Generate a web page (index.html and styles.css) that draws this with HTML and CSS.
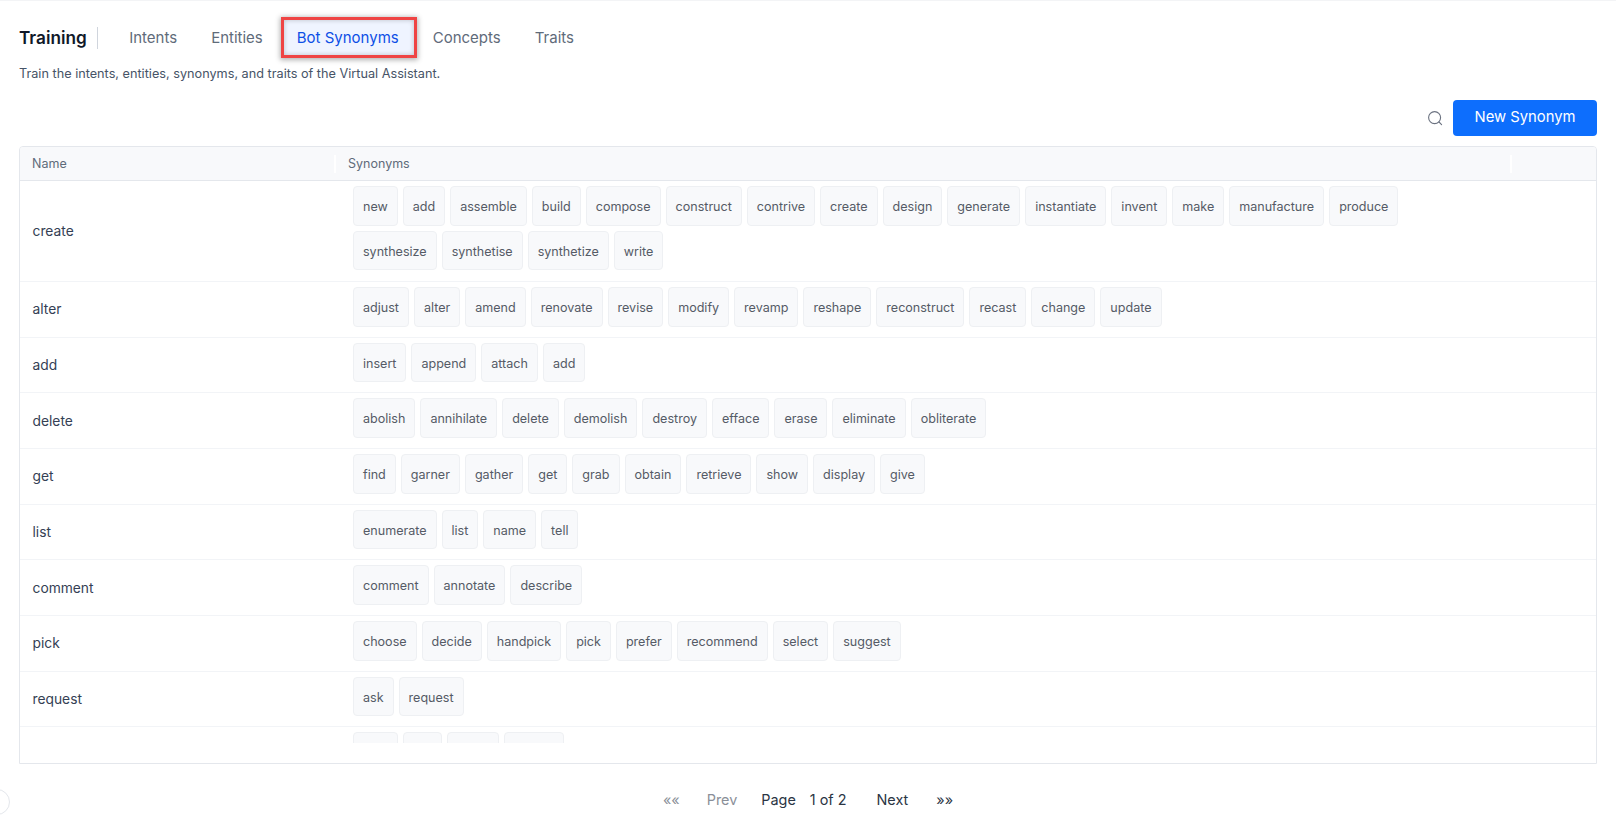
FILE: index.html
```html
<!DOCTYPE html>
<html lang="en">
<head>
<meta charset="utf-8">
<title>Training</title>
<link rel="stylesheet" href="styles.css">
</head>
<body>
<div class="page">
  <header class="tabs">
    <h1 class="title">Training</h1>
    <nav class="tablist">
      <a class="tab">Intents</a>
      <a class="tab">Entities</a>
      <a class="tab active">Bot Synonyms</a>
      <a class="tab">Concepts</a>
      <a class="tab">Traits</a>
    </nav>
  </header>
  <p class="desc">Train the intents, entities, synonyms, and traits of the Virtual Assistant.</p>
  <div class="actions">
    <svg class="search" width="16" height="16" viewBox="0 0 16 16" fill="none" stroke="#6b7280" stroke-width="1.1"><circle cx="7.6" cy="7.6" r="6"/><path d="M12 12 14.6 14.6" stroke-linecap="round"/></svg>
    <button class="primary">New Synonym</button>
  </div>
  <section class="table">
    <div class="thead">
      <div class="th name">Name</div>
      <div class="th syn">Synonyms</div>
      <div class="th end"></div>
    </div>
    <div class="tbody">
      <div class="row"><div class="cell-name">create</div><div class="chips">
        <span class="chip">new</span><span class="chip">add</span><span class="chip">assemble</span><span class="chip">build</span><span class="chip">compose</span><span class="chip">construct</span><span class="chip">contrive</span><span class="chip">create</span><span class="chip">design</span><span class="chip">generate</span><span class="chip">instantiate</span><span class="chip">invent</span><span class="chip">make</span><span class="chip">manufacture</span><span class="chip">produce</span><span class="chip">synthesize</span><span class="chip">synthetise</span><span class="chip">synthetize</span><span class="chip">write</span>
      </div></div>
      <div class="row"><div class="cell-name">alter</div><div class="chips">
        <span class="chip">adjust</span><span class="chip">alter</span><span class="chip">amend</span><span class="chip">renovate</span><span class="chip">revise</span><span class="chip">modify</span><span class="chip">revamp</span><span class="chip">reshape</span><span class="chip">reconstruct</span><span class="chip">recast</span><span class="chip">change</span><span class="chip">update</span>
      </div></div>
      <div class="row"><div class="cell-name">add</div><div class="chips">
        <span class="chip">insert</span><span class="chip">append</span><span class="chip">attach</span><span class="chip">add</span>
      </div></div>
      <div class="row"><div class="cell-name">delete</div><div class="chips">
        <span class="chip">abolish</span><span class="chip">annihilate</span><span class="chip">delete</span><span class="chip">demolish</span><span class="chip">destroy</span><span class="chip">efface</span><span class="chip">erase</span><span class="chip">eliminate</span><span class="chip">obliterate</span>
      </div></div>
      <div class="row"><div class="cell-name">get</div><div class="chips">
        <span class="chip">find</span><span class="chip">garner</span><span class="chip">gather</span><span class="chip">get</span><span class="chip">grab</span><span class="chip">obtain</span><span class="chip">retrieve</span><span class="chip">show</span><span class="chip">display</span><span class="chip">give</span>
      </div></div>
      <div class="row"><div class="cell-name">list</div><div class="chips">
        <span class="chip">enumerate</span><span class="chip">list</span><span class="chip">name</span><span class="chip">tell</span>
      </div></div>
      <div class="row"><div class="cell-name">comment</div><div class="chips">
        <span class="chip">comment</span><span class="chip">annotate</span><span class="chip">describe</span>
      </div></div>
      <div class="row"><div class="cell-name">pick</div><div class="chips">
        <span class="chip">choose</span><span class="chip">decide</span><span class="chip">handpick</span><span class="chip">pick</span><span class="chip">prefer</span><span class="chip">recommend</span><span class="chip">select</span><span class="chip">suggest</span>
      </div></div>
      <div class="row"><div class="cell-name">request</div><div class="chips">
        <span class="chip">ask</span><span class="chip">request</span>
      </div></div>
      <div class="row"><div class="cell-name"></div><div class="chips">
        <span class="chip blank"></span><span class="chip blank short"></span><span class="chip blank mid"></span><span class="chip blank wide"></span>
      </div></div>
    </div>
  </section>
  <footer class="pager">
    <span class="pg muted first">««</span>
    <span class="pg muted prev">Prev</span>
    <span class="pg dark page-label">Page</span>
    <span class="pg dark of">1 of 2</span>
    <span class="pg dark next">Next</span>
    <span class="pg dark last">»»</span>
  </footer>
</div>
<div class="dock"></div>
</body>
</html>
```
FILE: styles.css
```css
* { box-sizing: border-box; }
html, body { margin: 0; height: 830px; overflow: hidden; background: #fff; }
body { font-family: Inter, "Liberation Sans", sans-serif; color: #202124; border-top: 1px solid #f3f4f6; }
.page { padding: 0 19px; }
.tabs { display: flex; align-items: center; height: 74px; }
.title { margin: 0; font-size: 17.2px; line-height: 22px; font-weight: 600; color: #101828; padding-right: 10px; border-right: 1px solid #d0d5dd; }
.tablist { display: flex; margin-left: 14.5px; align-items: center; }
.tab { font-size: 15px; line-height: 24px; color: #5f6b7a; padding: 2px 17px 0; margin-bottom: 2px; height: 41px; display: flex; align-items: center; }
.tab.active { color: #0d4fe6; background: #eff4ff; padding: 2px 18px 0 16px; margin-left: 1px; margin-right: -1px; outline: 3px solid #ef4444; outline-offset: -3px; box-shadow: 0 1px 5px 1px rgba(0,0,0,.3), inset 0 0 5px 3px rgba(0,0,0,.22); }
.desc { margin: -10px 0 0; font-size: 12.7px; line-height: 18px; color: #475467; }
.actions { display: flex; justify-content: flex-end; align-items: center; gap: 10px; margin-top: 17px; }
.search { display: block; }
.primary { width: 144px; height: 36px; padding: 0 0 3px; border: 0; border-radius: 4px; background: #0d6efd; color: #fff; font: 400 14.8px Inter, sans-serif; }
.table { margin-top: 10px; height: 618px; border: 1px solid #e4e7ec; border-radius: 4px 4px 0 0; overflow: hidden; }
.thead { display: flex; height: 34px; align-items: center; background: #f8f9fb; border-bottom: 1px solid #e4e7ec; font-size: 12.5px; color: #5f6b7a; }
.th { height: 18px; line-height: 18px; }
.name { width: 314px; padding-left: 12px; }
.syn { flex: 1; padding-left: 12px; border-left: 2px solid #fff; }
.end { width: 86px; border-left: 2px solid #fff; }
.tbody { height: 562px; overflow: hidden; }
.row { display: flex; align-items: center; border-bottom: 1px solid #f2f4f7; padding: 5px 0 10px; }
.row:first-child { padding-bottom: 10.6px; }
.cell-name { width: 314px; padding: 5px 0 0 12.5px; font-size: 13.8px; color: #344054; }
.chips { flex: 1; display: flex; flex-wrap: wrap; gap: 5px; padding: 0 130px 0 19px; }
.chip { height: 39.67px; line-height: 39px; padding: 0 9px; font-size: 12.55px; color: #555b66; background: #f8f9fb; border: 1px solid #eef0f3; border-radius: 4px; white-space: nowrap; }
.blank { width: 45px; }
.short { width: 39px; }
.mid { width: 52px; }
.wide { width: 60px; }
.pager { display: flex; justify-content: center; align-items: center; height: 70px; font-size: 14.4px; }
.pg { display: block; }
.muted { color: #8a8f98; }
.dark { color: #2b3544; }
.first { margin-right: 27px; }
.prev { margin-right: 24px; }
.page-label { margin-right: 14px; }
.of { margin-right: 30px; }
.next { margin-right: 28px; }
.dock { position: absolute; left: -16px; top: 789px; width: 26px; height: 26px; border-radius: 50%; border: 1px solid #e4e7ec; background: #fff; }
```
